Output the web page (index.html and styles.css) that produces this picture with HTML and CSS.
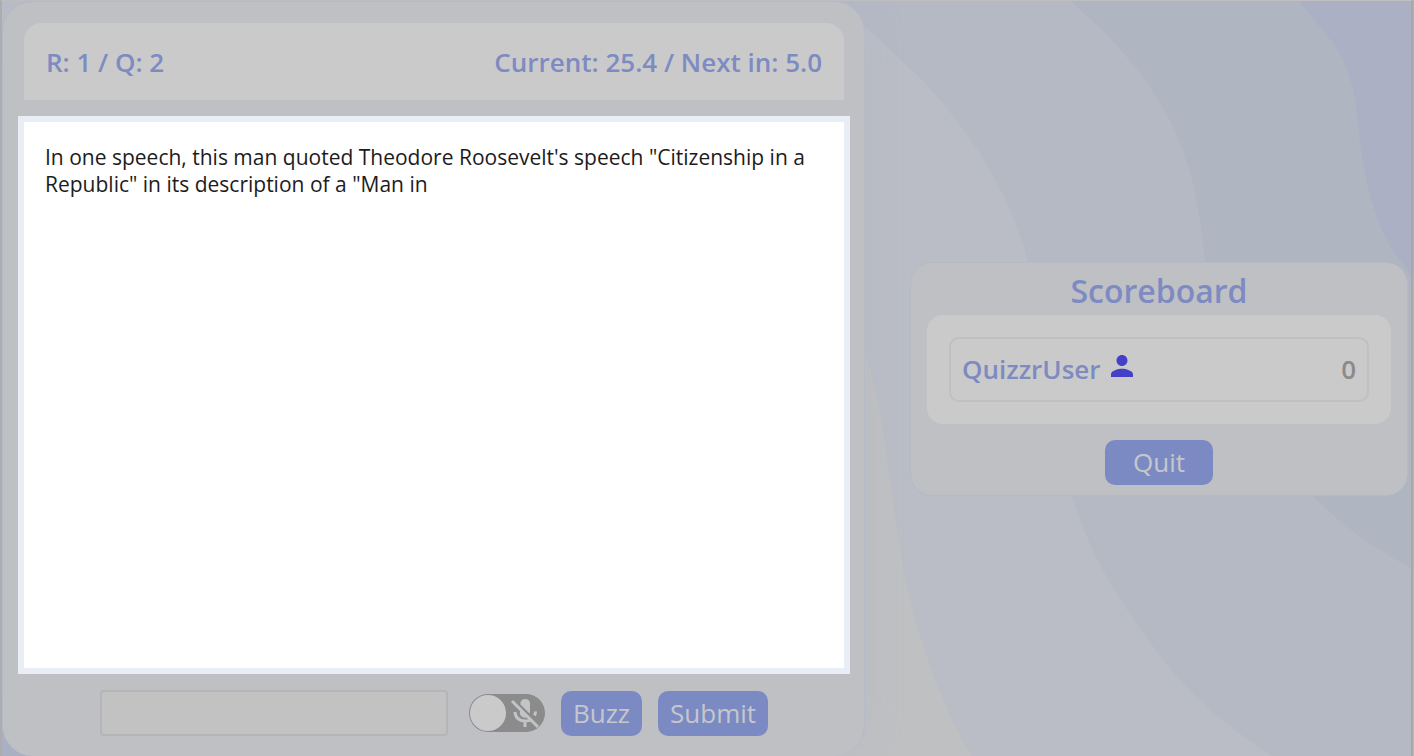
FILE: index.html
```html
<!DOCTYPE html>
<html lang="en">
<head>
<meta charset="utf-8">
<title>Quizzr</title>
<meta name="viewport" content="width=device-width, initial-scale=1">
<link rel="stylesheet" href="styles.css">
</head>
<body>
<svg class="waves" viewBox="0 0 1414 756" preserveAspectRatio="none" aria-hidden="true">
  <path class="wave-1" d="M0 0H1414V756H971C958 734 948 712 938 687C929 665 922 645 916 623C908 596 903 570 899 542L890 480C884 430 875 370 850 310L0 60Z"/>
  <path class="wave-2" d="M820 0H1414V756H1272C1240 735 1213 714 1189 690C1173 673 1158 654 1143 632C1129 613 1116 594 1104 572C1090 547 1081 524 1072 497C1052 430 1044 330 1028 262C1018 224 1003 191 984 160C966 131 946 106 924 82L867 28Z"/>
  <path class="wave-3" d="M1070 0H1414V570C1393 558 1374 547 1355 533C1340 522 1327 510 1314 497C1230 420 1213 360 1205 262C1202 232 1198 205 1192 180C1187 160 1180 141 1171 123C1154 89 1132 61 1107 35Z"/>
  <path class="wave-4" d="M1298 0H1414V281C1410 275 1406 269 1402 263C1391 248 1383 236 1378 220C1370 199 1366 179 1362 157C1358 133 1358 111 1353 90C1349 72 1343 57 1333 43Z"/>
  <path class="corner" d="M0 715H40V756H0Z"/>
</svg>
<main class="page">
  <section class="game" aria-label="Game">
    <header class="status">
      <span>R: 1 / Q: 2</span>
      <span>Current: 25.4 / Next in: 5.0</span>
    </header>
    <div class="question">
      <p class="question-text">In one speech, this man quoted Theodore Roosevelt's speech "Citizenship in a Republic" in its description of a "Man in</p>
    </div>
    <form class="controls">
      <input class="answer" type="text" aria-label="Answer">
      <label class="mic">
        <input class="mic-input" type="checkbox" aria-label="Microphone">
        <svg class="mic-icon" viewBox="0 0 30 32" aria-hidden="true">
          <path class="mic-fill" d="M10.500 6.500a5 5 0 0 1 9.500 0v9a5 5 0 0 1-.5 2L10.500 8.500Z"/>
          <path class="mic-fill" d="M10 12.500l8 8a5 5 0 0 1-8-5Z"/>
          <path class="mic-line" d="M5 16c0 5 4 9 10 9 2 0 4 0 5-1M25.500 15.500c0 2-.5 3-1 4M15 25v6"/>
          <path class="mic-slash" d="M2 5l26 26"/>
        </svg>
      </label>
      <button class="button" type="button">Buzz</button>
      <button class="button" type="submit">Submit</button>
    </form>
  </section>
  <aside class="scoreboard">
    <h1 class="scoreboard-title">Scoreboard</h1>
    <div class="players">
      <div class="player">
        <span class="player-name">QuizzrUser</span>
        <svg class="player-icon" viewBox="4 4 16 16" aria-hidden="true"><path d="M12 12c2.21 0 4-1.79 4-4s-1.79-4-4-4-4 1.79-4 4 1.79 4 4 4zm0 2c-2.67 0-8 1.34-8 4v2h16v-2c0-2.66-5.33-4-8-4z"/></svg>
        <span class="player-score">0</span>
      </div>
    </div>
    <button class="button button-wide" type="button">Quit</button>
  </aside>
</main>
</body>
</html>
```

FILE: styles.css
```css
* {
  box-sizing: border-box;
}

body {
  margin: 0;
  min-height: 100vh;
  background: #bfc0c2;
  color: #1c1c1c;
  font-family: "Open Sans", "Noto Sans", sans-serif;
}

.waves {
  position: absolute;
  inset: 0;
  width: 100%;
  height: 100%;
}

.wave-1 { fill: #babdc5; }
.wave-2 { fill: #b5b9c4; }
.wave-3 { fill: #afb6c2; }
.wave-4 { fill: #abb0c4; }
.corner { fill: #abb1c2; }

.page {
  position: relative;
  display: grid;
  grid-template-columns: minmax(0, 863fr) minmax(0, 498fr);
  column-gap: 45px;
  min-height: 100vh;
  padding: 0 3px 0 0;
  border: solid #adadae;
  border-width: 1px 2px 0;
  border-top-color: #bfbfc2;
  border-right-color: #a8a8a8;
  margin-right: 1px;
}

.game {
  display: flex;
  flex-direction: column;
  gap: 16px;
  padding: 21px 14px 20px 15px;
  border: solid #b4bac6;
  border-width: 1px 1px 0;
  border-radius: 31px;
  background: #bfc0c4;
  box-shadow: 0 0 40px rgba(165, 175, 200, 0.2);
}

.status {
  display: flex;
  justify-content: space-between;
  align-items: center;
  min-height: 77px;
  margin: 0 6px;
  padding: 0 22px;
  border-radius: 18px 18px 0 0;
  background: #cacaca;
  color: #7d8bc2;
  font-size: 26px;
  font-weight: 600;
}

.question {
  flex: 1;
  padding: 22px 21px;
  border: 6px solid #e8edf6;
  background: #fff;
}

.question-text {
  margin: 0;
  font-size: 21px;
  line-height: 27px;
}

.controls {
  display: flex;
  justify-content: center;
  align-items: center;
  gap: 16px;
}

.answer {
  flex: 0 1 348px;
  min-width: 0;
  height: 46px;
  margin-right: 5px;
  padding: 0 12px;
  border: 2px solid #b4b5b6;
  border-radius: 4px;
  background: #c2c2c3;
  font: inherit;
  font-size: 21px;
}

.mic {
  position: relative;
  flex: none;
  display: flex;
  width: 76px;
  height: 38px;
}

.mic-input {
  appearance: none;
  display: flex;
  width: 100%;
  height: 100%;
  margin: 0;
  padding: 1px;
  border-radius: 19px;
  background: #8b8b8b;
}

.mic-input::before {
  content: "";
  width: 36px;
  height: 36px;
  border-radius: 50%;
  background: #cacaca;
}

.mic-input:checked {
  justify-content: flex-end;
}

.mic-icon {
  position: absolute;
  top: 2px;
  right: 5px;
  width: 30px;
  height: 32px;
  pointer-events: none;
}

.mic-fill { fill: #c3c4c6; }
.mic-line { fill: none; stroke: #c3c4c6; stroke-width: 3; }
.mic-slash { stroke: #c3c4c6; stroke-width: 3; }

.button {
  height: 45px;
  padding: 0 12px;
  border: 0;
  border-radius: 10px;
  background: #7c8ac3;
  color: #c6c7ca;
  font: inherit;
  font-size: 26px;
}

.button-wide {
  padding: 0 28px;
}

.scoreboard {
  align-self: center;
  display: flex;
  flex-direction: column;
  align-items: center;
  padding: 7px 16px 10px;
  border: 1px solid #b4bac6;
  border-radius: 22px;
  background: #bfc0c4;
}

.scoreboard-title {
  margin: 0 0 4px;
  color: #7d8bc2;
  font-size: 32px;
  font-weight: 600;
  line-height: 41px;
}

.players {
  align-self: stretch;
  margin-bottom: 16px;
  padding: 22px;
  border-radius: 16px;
  background: #cacaca;
}

.player {
  display: flex;
  align-items: center;
  gap: 10px;
  height: 65px;
  padding: 0 11px;
  border: 2px solid #bfc0c4;
  border-radius: 10px;
  font-size: 26px;
  font-weight: 600;
}

.player-name {
  color: #7d8bc2;
}

.player-icon {
  width: 22px;
  height: 22px;
  margin-bottom: 7px;
  fill: #4540c8;
}

.player-score {
  margin-left: auto;
  color: #8b8b8b;
}
```
